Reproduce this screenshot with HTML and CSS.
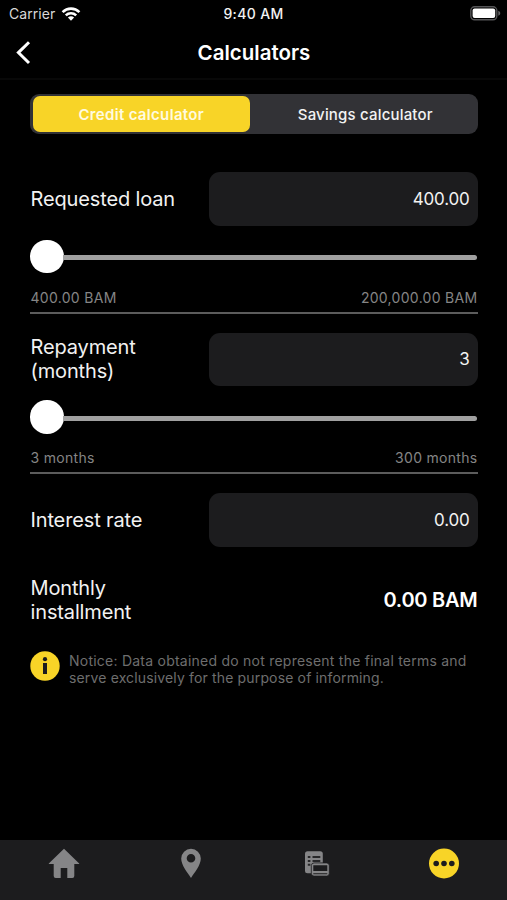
FILE: index.html
```html
<!DOCTYPE html>
<html lang="en">
<head>
<meta charset="utf-8">
<title>Calculators</title>
<link rel="stylesheet" href="styles.css">
</head>
<body>
<div class="screen">
  <header class="status">
    <div class="carrier"><span class="carrier-name">Carrier</span>
      <svg class="wifi" width="20" height="16" viewBox="0 0 20 16"><g fill="none" stroke="#fff" stroke-width="2.6"><path d="M1.6 6.1a12 12 0 0 1 16.8 0"/><path d="M4.8 9.4a7.5 7.5 0 0 1 10.4 0"/></g><path d="M6.9 11.6a4.5 4.5 0 0 1 6.2 0L10 14.8z" fill="#fff"/></svg>
    </div>
    <span class="time">9:40 AM</span>
    <svg class="battery" width="31" height="15" viewBox="0 0 31 15"><rect x=".8" y=".8" width="26" height="13" rx="3.8" fill="none" stroke="#555557" stroke-width="1.4"/><rect x="2.6" y="2.6" width="22.6" height="9.4" rx="2" fill="#fff"/><path d="M28.3 4.8c2.6.8 2.6 4.2 0 5z" fill="#666668"/></svg>
  </header>
  <nav class="navbar">
    <svg class="back" width="16" height="26" viewBox="0 0 16 26"><path d="M14 2.2 3.4 12.6l10.6 10.4" fill="none" stroke="#fff" stroke-width="3"/></svg>
    <h1 class="title">Calculators</h1>
    <span></span>
  </nav>
  <main class="content">
    <div class="segments">
      <div class="segment active">Credit calculator</div>
      <div class="segment">Savings calculator</div>
    </div>
    <section class="group">
      <div class="row"><span class="label">Requested loan</span><div class="field">400.00</div></div>
      <div class="slider"><i class="knob"></i><i class="track"></i></div>
      <div class="range"><span>400.00 BAM</span><span>200,000.00 BAM</span></div>
    </section>
    <section class="group">
      <div class="row"><span class="label">Repayment<br>(months)</span><div class="field">3</div></div>
      <div class="slider"><i class="knob"></i><i class="track"></i></div>
      <div class="range"><span>3 months</span><span>300 months</span></div>
    </section>
    <div class="row"><span class="label">Interest rate</span><div class="field">0.00</div></div>
    <div class="row result"><span class="label">Monthly<br>installment</span><strong class="total">0.00 BAM</strong></div>
    <div class="notice">
      <svg width="30" height="30" viewBox="0 0 30 30"><circle cx="15" cy="15" r="14.7" fill="#f8d427"/><circle cx="15" cy="8.2" r="2.1" fill="#1c1c1e"/><path d="M13 12h4v11h-4z" fill="#1c1c1e"/></svg>
      <p>Notice: Data obtained do not represent the final terms and<br><span class="tail">serve exclusively for the purpose of informing.</span></p>
    </div>
  </main>
  <footer class="tabs">
    <svg width="32" height="32" viewBox="0 0 32 32"><path d="M16 .8.8 15.4q-.3.7.5.7h4.400v12q0 2 2 2h5v-10h6.600v10h5q2 0 2-2v-12h4.400q.8 0 .5-.7z" fill="#858587"/></svg>
    <svg width="32" height="32" viewBox="0 0 32 32"><path fill-rule="evenodd" d="M16 .8a9.800 9.800 0 0 0-9.800 9.800C6.200 17 12.500 25 16 29.900c3.500-4.900 9.800-12.900 9.800-19.300A9.800 9.800 0 0 0 16 .8zm0 5.200a4.300 4.300 0 1 1 0 8.600 4.300 4.300 0 0 1 0-8.600z" fill="#858587"/></svg>
    <svg width="32" height="32" viewBox="0 0 32 32"><rect x="4" y="3.200" width="17.800" height="22" rx="2.500" fill="#858587"/><path d="M6.800 9h2.600M11.500 9h7.800M6.800 12.900h2.600M11.500 12.900h7.800M6.800 16.800h2.600" stroke="#28282a" stroke-width="2"/><rect x="10.300" y="14.900" width="18" height="13.200" rx="2.800" fill="#858587" stroke="#1c1c1e" stroke-width=".8"/><path d="M12.300 17.200h14v5.800h-14zM12.300 25.200h14v1h-14z" fill="#1c1c1e"/></svg>
    <svg width="32" height="32" viewBox="0 0 32 32"><circle cx="16" cy="15.500" r="15" fill="#f8d427"/><g fill="#1c1c1e"><circle cx="8.200" cy="15.500" r="2.800"/><circle cx="16" cy="15.500" r="2.800"/><circle cx="23.800" cy="15.500" r="2.800"/></g></svg>
  </footer>
</div>
</body>
</html>
```
FILE: styles.css
```css
* { box-sizing: border-box; }
body { margin: 0; background: #000; color: #f2f2f2; font-family: Inter, "Liberation Sans", sans-serif; }
.screen { width: 507px; height: 900px; display: flex; flex-direction: column; overflow: hidden; }
.status { height: 27px; padding: 0 6px 0 9px; display: grid; grid-template-columns: 1fr auto 1fr; align-items: center; font-size: 14px; }
.carrier { display: flex; align-items: center; gap: 6px; color: #d8d8d8; letter-spacing: .05px; }
.time { margin-right: 3px; font-weight: 500; letter-spacing: .35px; }
.battery { justify-self: end; }
.navbar { height: 53px; padding: 0 15px; display: grid; grid-template-columns: 1fr auto 1fr; align-items: center; border-bottom: 2px solid #080808; }
.title { margin: 0 0 0 1px; font-size: 20.5px; font-weight: 600; color: #fff; }
.content { flex: 1; padding: 14px 29.5px 0 30px; }
.segments { height: 40px; padding: 2px 2px 2px 2.5px; display: flex; border-radius: 9px; background: #323236; margin-bottom: 38px; }
.segment { flex: 1; padding-left: 5px; display: flex; align-items: center; justify-content: center; font-size: 15px; font-weight: 500; letter-spacing: .18px; white-space: nowrap; }
.segment.active { flex: 0 0 217.5px; padding: 0; border-radius: 7px; background: #f8d427; color: #fffbe0; font-weight: 600; letter-spacing: .33px; }
.group { height: 141.5px; border-bottom: 2px solid #5c5c5c; margin-bottom: 19px; }
.row { display: flex; align-items: center; justify-content: space-between; }
.label { padding-left: .5px; font-size: 20px; line-height: 24px; letter-spacing: -.14px; white-space: nowrap; }
.field { width: 268.5px; height: 53.5px; padding-right: 8px; border-radius: 11px; background: #1c1c1e; display: flex; align-items: center; justify-content: flex-end; font-size: 17px; letter-spacing: -.2px; }
.slider { height: 34px; margin-top: 14px; display: flex; align-items: center; }
.knob { width: 33.5px; height: 33.5px; border-radius: 50%; background: #fff; }
.track { flex: 1; height: 5px; margin: 2px 1px 0 -1px; border-radius: 0 3px 3px 0; background: #a0a0a0; }
.range { display: flex; justify-content: space-between; margin-top: 15px; padding-left: .5px; font-size: 14px; line-height: 18px; letter-spacing: .3px; color: #858585; }
.result { margin-top: 29px; }
.total { font-size: 20px; font-weight: 600; letter-spacing: -.25px; color: #fff; }
.notice { display: flex; gap: 9px; margin-top: 27px; color: #6e6e6e; font-size: 14px; line-height: 17px; letter-spacing: .235px; }
.notice p { margin: 1px 0 0; white-space: nowrap; }
.tail { letter-spacing: .15px; }
.tabs { flex: none; height: 60.5px; padding: 8px 0 0 1px; background: #1c1c1e; display: flex; justify-content: space-around; }
```
